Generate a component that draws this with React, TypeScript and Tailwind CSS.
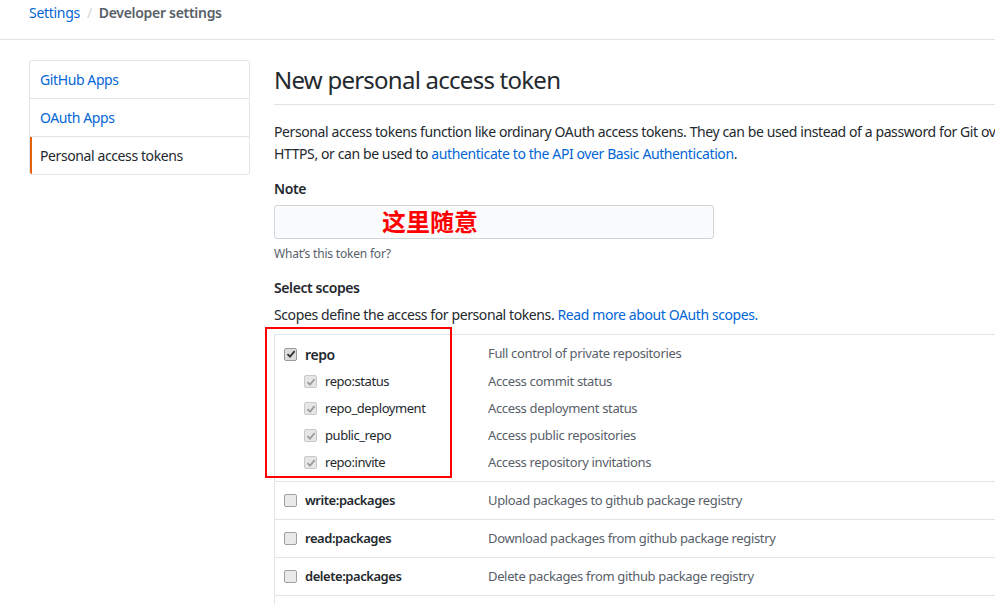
import React from "react"

const font = { fontFamily: '"Noto Sans", "Open Sans", Arial, sans-serif' }

function Check({ checked, disabled }: { checked: boolean; disabled?: boolean }) {
  return (
    <span
      className={
        "inline-flex w-[13px] h-[13px] items-center justify-center rounded-[2px] border shrink-0 " +
        (checked
          ? disabled
            ? "border-[#c8c8c8] bg-[#e6e6e6]"
            : "border-[#9a9a9a] bg-[#dcdcdc]"
          : "border-[#a0a0a0] bg-[#e9e9e9]")
      }
    >
      {checked && (
        <svg width="10" height="10" viewBox="0 0 10 10">
          <path
            d="M1.5 5.2 L4 7.6 L8.6 2.2"
            fill="none"
            stroke={disabled ? "#9c9c9c" : "#333"}
            strokeWidth="1.8"
          />
        </svg>
      )}
    </span>
  )
}

const subScopes = [
  ["repo:status", "Access commit status"],
  ["repo_deployment", "Access deployment status"],
  ["public_repo", "Access public repositories"],
  ["repo:invite", "Access repository invitations"],
]

const packageScopes = [
  ["write:packages", "Upload packages to github package registry"],
  ["read:packages", "Download packages from github package registry"],
  ["delete:packages", "Delete packages from github package registry"],
]

export default function App() {
  return (
    <div
      className="w-[995px] h-[604px] overflow-hidden bg-white text-[#24292e] text-[14px] tracking-[-0.4px]"
      style={font}
    >
      {/* breadcrumb */}
      <div className="h-[40px] border-b border-[#e1e4e8] pl-[29px] pt-[2px] text-[14px] tracking-[-0.3px] flex gap-[7px] items-start">
        <span className="text-[#0366d6]">Settings</span>
        <span className="text-[#d1d5da]">/</span>
        <span className="text-[#586069] font-semibold">Developer settings</span>
      </div>

      <div className="flex pt-[20px] pl-[29px]">
        {/* sidebar */}
        <div className="w-[221px] shrink-0">
          <div className="border border-[#e1e4e8] rounded-[3px] overflow-hidden">
            <div className="h-[38px] border-b border-[#e1e4e8] pl-[10px] flex items-center text-[#0366d6]">GitHub Apps</div>
            <div className="h-[38px] border-b border-[#e1e4e8] pl-[10px] flex items-center text-[#0366d6]">OAuth Apps</div>
            <div className="h-[37px] border-l-2 border-[#e36209] pl-[8px] flex items-center text-[#24292e]">Personal access tokens</div>
          </div>
        </div>

        {/* main */}
        <div className="ml-[24px] flex-1 min-w-0">
          <div className="border-b border-[#e1e4e8] h-[45px] whitespace-nowrap">
            <h1 className="text-[24px] leading-[40px] font-normal tracking-[-0.75px]">New personal access token</h1>
          </div>
          <p className="mt-[16px] leading-[22px] whitespace-nowrap">
            Personal access tokens function like ordinary OAuth access tokens. They can be used instead of a password for Git over
            <br />
            HTTPS, or can be used to <span className="text-[#0366d6]">authenticate to the API over Basic Authentication</span>.
          </p>

          <div className="mt-[13px] font-semibold">Note</div>
          <div className="relative mt-[6px] w-[440px] h-[34px] border border-[#d1d5da] bg-[#fafbfc] rounded-[3px]">
            <span
              className="absolute left-[107px] top-[1px] text-[24px] font-bold text-[#ff0000] leading-[28px] tracking-normal"
              style={{ fontFamily: '"Noto Sans CJK SC", sans-serif' }}
            >
              这里随意
            </span>
          </div>
          <div className="mt-[6px] text-[12px] text-[#586069] tracking-[-0.2px]">What’s this token for?</div>

          <div className="mt-[14px] font-semibold">Select scopes</div>
          <div className="mt-[6px] whitespace-nowrap">
            Scopes define the access for personal tokens. <span className="text-[#0366d6]">Read more about OAuth scopes.</span>
          </div>

          <div className="relative mt-[9px] border-t border-l border-[#e1e4e8] whitespace-nowrap">
            {/* annotation box */}
            <div className="absolute left-[-10px] top-[-8px] w-[187px] h-[151px] border-2 border-[#ff0000]" />
            <div className="border-b border-[#e1e4e8] pt-[7px] pb-[5px]">
              <div className="flex items-center h-[24px] mb-[2px]">
                <div className="w-[213px] pl-[9px] flex items-center gap-[8px]">
                  <Check checked />
                  <span className="font-semibold">repo</span>
                </div>
                <span className="text-[#586069] text-[13px] tracking-[-0.35px]">Full control of private repositories</span>
              </div>
              {subScopes.map(([name, desc]) => (
                <div key={name} className="flex items-center h-[27px]">
                  <div className="w-[213px] pl-[29px] flex items-center gap-[8px]">
                    <Check checked disabled />
                    <span className="text-[13px] tracking-[-0.45px]">{name}</span>
                  </div>
                  <span className="text-[#586069] text-[13px] tracking-[-0.35px]">{desc}</span>
                </div>
              ))}
            </div>
            {packageScopes.map(([name, desc]) => (
              <div key={name} className="flex items-center h-[38px] border-b border-[#e1e4e8]">
                <div className="w-[213px] pl-[9px] flex items-center gap-[8px]">
                  <Check checked={false} />
                  <span className="font-semibold text-[13px] tracking-[-0.45px]">{name}</span>
                </div>
                <span className="text-[#586069] text-[13px] tracking-[-0.35px]">{desc}</span>
              </div>
            ))}
            <div className="h-[20px]" />
          </div>
        </div>
      </div>
    </div>
  )
}
